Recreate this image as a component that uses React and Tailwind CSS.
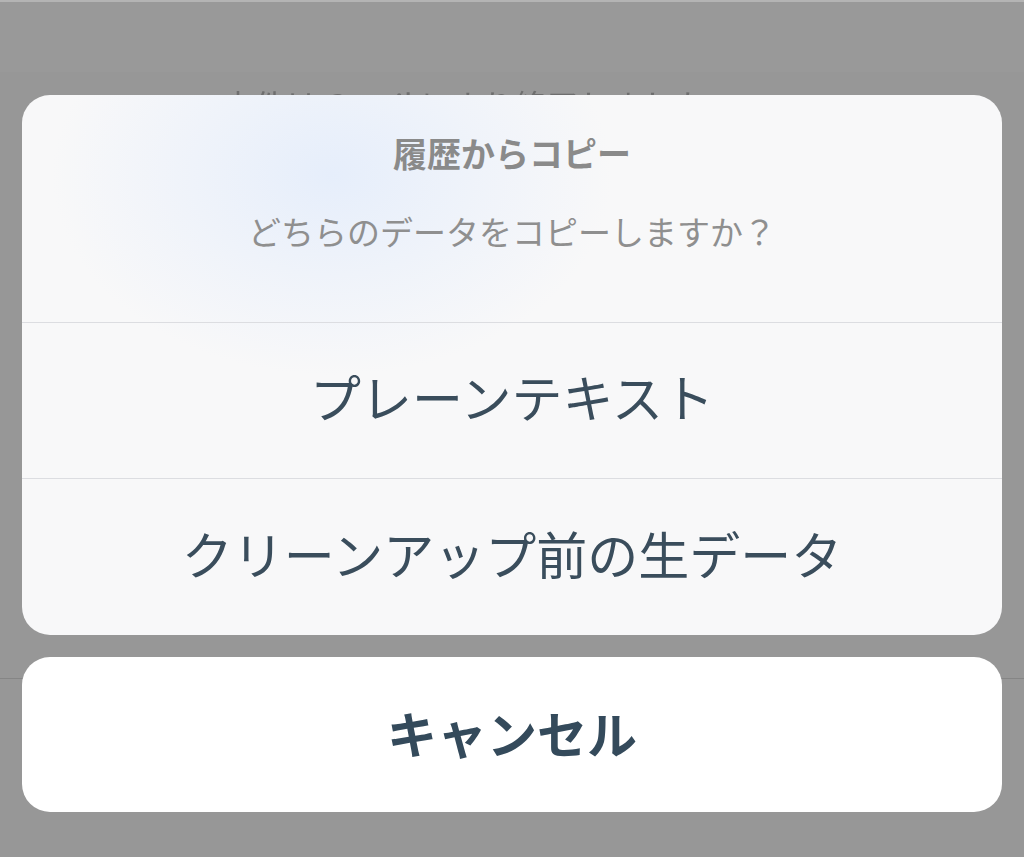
export default function App() {
  const font = "font-['Noto_Sans_CJK_JP','Noto_Sans',sans-serif]";

  return (
    <div className={`relative h-[857px] w-full overflow-hidden bg-[#989898] ${font}`}>
      {/* background page, dimmed */}
      <div className="flex h-full flex-col border-t-2 border-[#b4b4b4]">
        <div className="h-[70px] bg-[#999999]" />
        <div className="flex-1 bg-[#979797]">
          <p className="pl-[222px] pt-[16px] text-[32px] leading-none text-[#6e6e6e] blur-[0.4px]">
            本件は Gmail により終了しました
          </p>
          <div className="mt-[558px] h-px bg-[#858585]" />
        </div>
      </div>

      {/* action sheet */}
      <div className="absolute inset-0 flex flex-col gap-[22px] px-[22px] pt-[95px]">
        <div className="overflow-hidden rounded-[28px] bg-[#f8f8f9] bg-[radial-gradient(ellipse_280px_200px_at_310px_80px,#e6eefb,rgba(248,248,249,0))]">
          <div className="flex h-[227px] flex-col items-center pt-[37px]">
            <h2 className="text-[34px] font-bold leading-[42px] text-[#8a8a8a]">
              履歴からコピー
            </h2>
            <p className="mt-[36px] text-[33px] leading-[42px] text-[#8f8f8f]">
              どちらのデータをコピーしますか？
            </p>
          </div>
          <button className="flex h-[156px] w-full items-center justify-center border-t border-[#dcdde1] pb-[8px] text-[51px] leading-none text-[#3a4d5c]">
            プレーンテキスト
          </button>
          <button className="flex h-[157px] w-full items-center justify-center border-t border-[#dcdde1] pb-[8px] text-[51px] leading-none text-[#3a4d5c]">
            クリーンアップ前の生データ
          </button>
        </div>

        <button className="flex h-[155px] w-full items-center justify-center rounded-[28px] bg-white pb-[6px] text-[50px] font-bold leading-none text-[#344a5b]">
          キャンセル
        </button>
      </div>
    </div>
  );
}
